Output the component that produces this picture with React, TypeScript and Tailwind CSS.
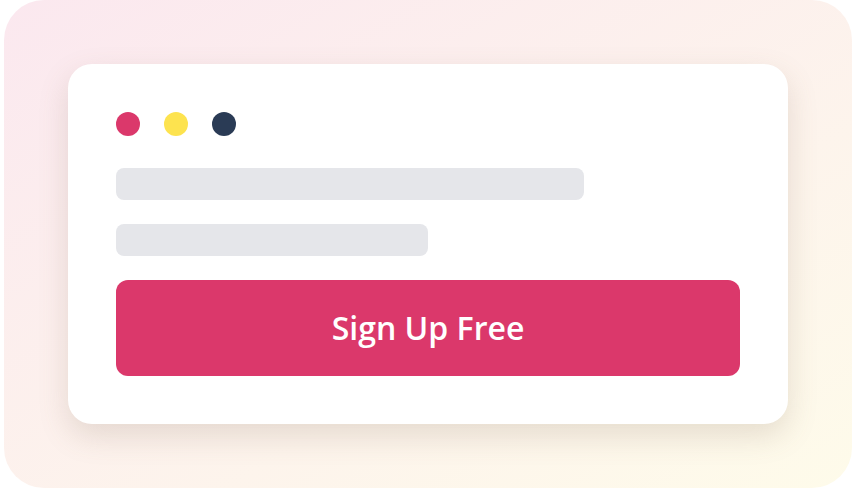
export default function App() {
  return (
    <div className="w-[860px] h-[490px] bg-white">
      <div className="ml-1 w-[848px] h-[488px] rounded-[40px] bg-gradient-to-br from-[#fbe8ef] to-[#fefbea] p-16">
        <div className="w-[720px] h-[360px] rounded-[24px] bg-white p-12 shadow-[0_12px_30px_rgba(120,100,80,0.18)] flex flex-col">
          <div className="flex gap-6">
            <div className="w-6 h-6 rounded-full bg-[#db386b]" />
            <div className="w-6 h-6 rounded-full bg-[#fde34f]" />
            <div className="w-6 h-6 rounded-full bg-[#2a3b55]" />
          </div>
          <div className="mt-8 w-[468px] h-8 rounded-lg bg-[#e5e6ea]" />
          <div className="mt-6 w-[312px] h-8 rounded-lg bg-[#e5e6ea]" />
          <button className="mt-6 h-24 w-full rounded-xl bg-[#db386b] text-white text-[32px] font-semibold flex items-center justify-center" style={{ fontFamily: '"Open Sans", sans-serif' }}>
            Sign Up Free
          </button>
        </div>
      </div>
    </div>
  );
}
